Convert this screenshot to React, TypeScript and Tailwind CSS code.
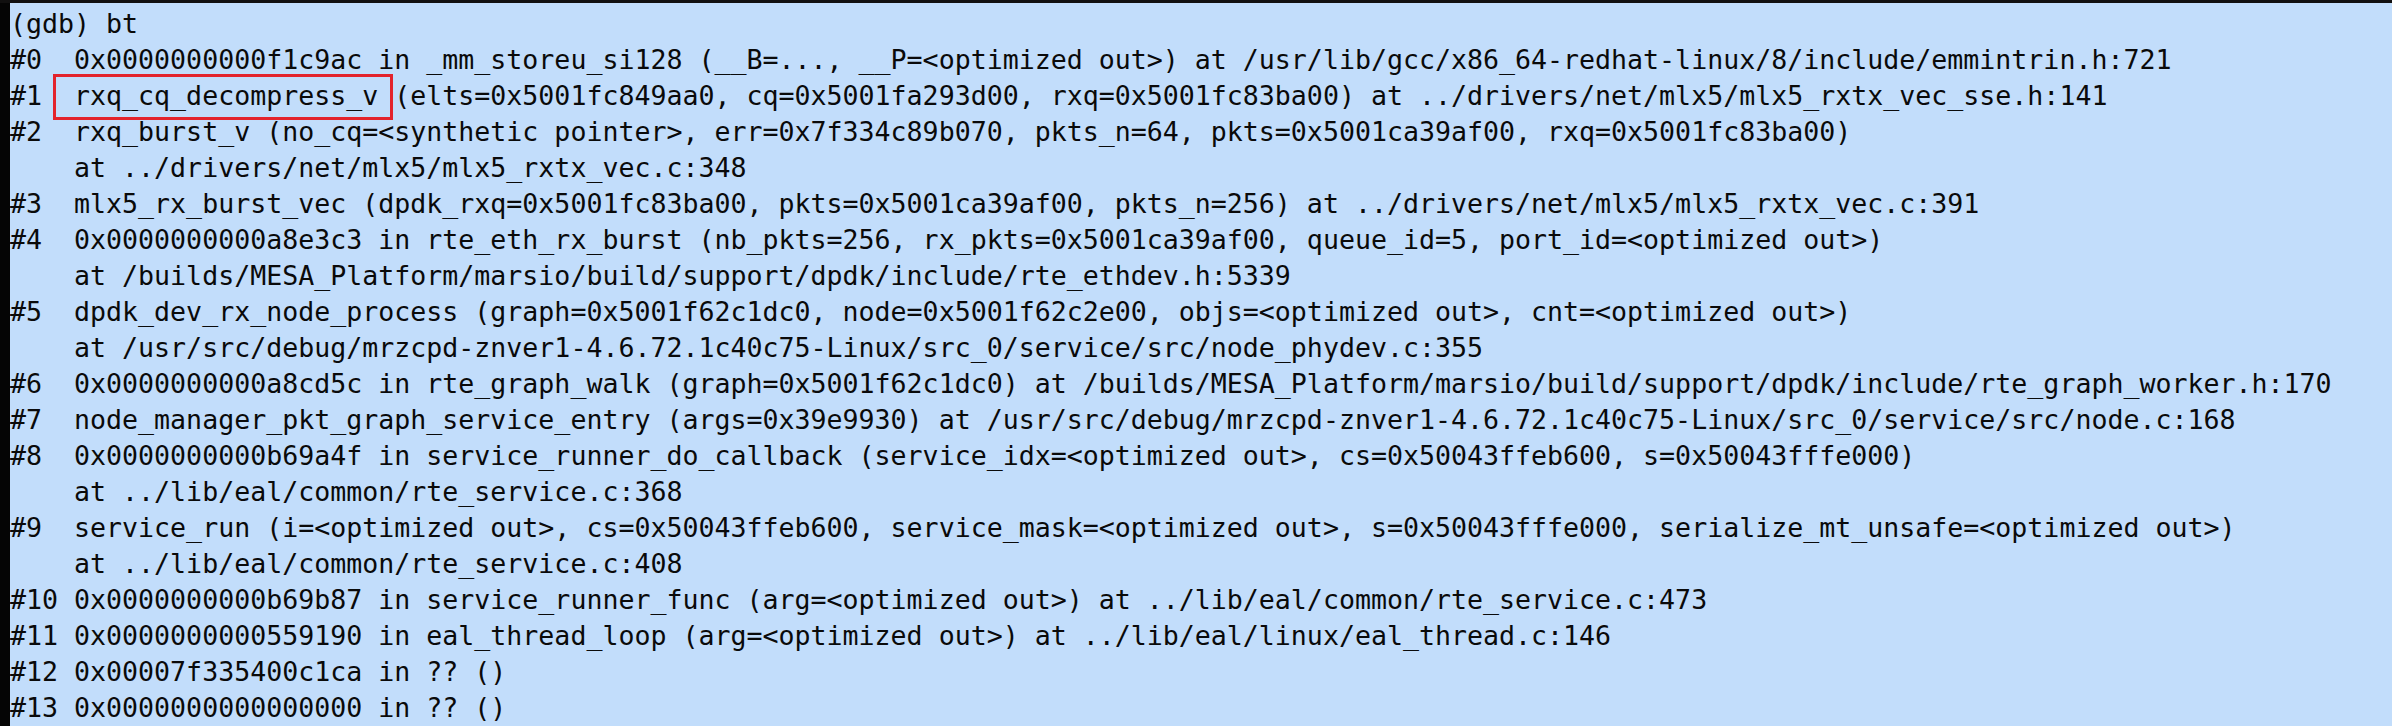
import React from "react";

const lines = [
  "(gdb) bt",
  "#0  0x0000000000f1c9ac in _mm_storeu_si128 (__B=..., __P=<optimized out>) at /usr/lib/gcc/x86_64-redhat-linux/8/include/emmintrin.h:721",
  "#1  rxq_cq_decompress_v (elts=0x5001fc849aa0, cq=0x5001fa293d00, rxq=0x5001fc83ba00) at ../drivers/net/mlx5/mlx5_rxtx_vec_sse.h:141",
  "#2  rxq_burst_v (no_cq=<synthetic pointer>, err=0x7f334c89b070, pkts_n=64, pkts=0x5001ca39af00, rxq=0x5001fc83ba00)",
  "    at ../drivers/net/mlx5/mlx5_rxtx_vec.c:348",
  "#3  mlx5_rx_burst_vec (dpdk_rxq=0x5001fc83ba00, pkts=0x5001ca39af00, pkts_n=256) at ../drivers/net/mlx5/mlx5_rxtx_vec.c:391",
  "#4  0x0000000000a8e3c3 in rte_eth_rx_burst (nb_pkts=256, rx_pkts=0x5001ca39af00, queue_id=5, port_id=<optimized out>)",
  "    at /builds/MESA_Platform/marsio/build/support/dpdk/include/rte_ethdev.h:5339",
  "#5  dpdk_dev_rx_node_process (graph=0x5001f62c1dc0, node=0x5001f62c2e00, objs=<optimized out>, cnt=<optimized out>)",
  "    at /usr/src/debug/mrzcpd-znver1-4.6.72.1c40c75-Linux/src_0/service/src/node_phydev.c:355",
  "#6  0x0000000000a8cd5c in rte_graph_walk (graph=0x5001f62c1dc0) at /builds/MESA_Platform/marsio/build/support/dpdk/include/rte_graph_worker.h:170",
  "#7  node_manager_pkt_graph_service_entry (args=0x39e9930) at /usr/src/debug/mrzcpd-znver1-4.6.72.1c40c75-Linux/src_0/service/src/node.c:168",
  "#8  0x0000000000b69a4f in service_runner_do_callback (service_idx=<optimized out>, cs=0x50043ffeb600, s=0x50043fffe000)",
  "    at ../lib/eal/common/rte_service.c:368",
  "#9  service_run (i=<optimized out>, cs=0x50043ffeb600, service_mask=<optimized out>, s=0x50043fffe000, serialize_mt_unsafe=<optimized out>)",
  "    at ../lib/eal/common/rte_service.c:408",
  "#10 0x0000000000b69b87 in service_runner_func (arg=<optimized out>) at ../lib/eal/common/rte_service.c:473",
  "#11 0x0000000000559190 in eal_thread_loop (arg=<optimized out>) at ../lib/eal/linux/eal_thread.c:146",
  "#12 0x00007f335400c1ca in ?? ()",
  "#13 0x0000000000000000 in ?? ()",
];

export default function App() {
  return (
    <div className="flex h-[726px] w-[2392px] flex-col overflow-hidden bg-[#050505]">
      <div className="h-[5px] bg-[#111010]" />
      <div className="flex flex-1">
        <div className="w-[10px] bg-[#050505]" />
        <div
          className="flex-1 bg-[#c2ddfb] pt-[3px] text-[26.6px] text-[#0a0a0a]"
          style={{ fontFamily: '"DejaVu Sans Mono", monospace' }}
        >
          {lines.map((line, i) => (
            <div key={i} className="relative h-[36px] whitespace-pre leading-[36px]">
              {line}
              {i === 2 && (
                <div className="absolute left-[43px] top-[-4px] h-[46px] w-[340px] border-[3px] border-[#e3232c]" />
              )}
            </div>
          ))}
        </div>
      </div>
    </div>
  );
}
